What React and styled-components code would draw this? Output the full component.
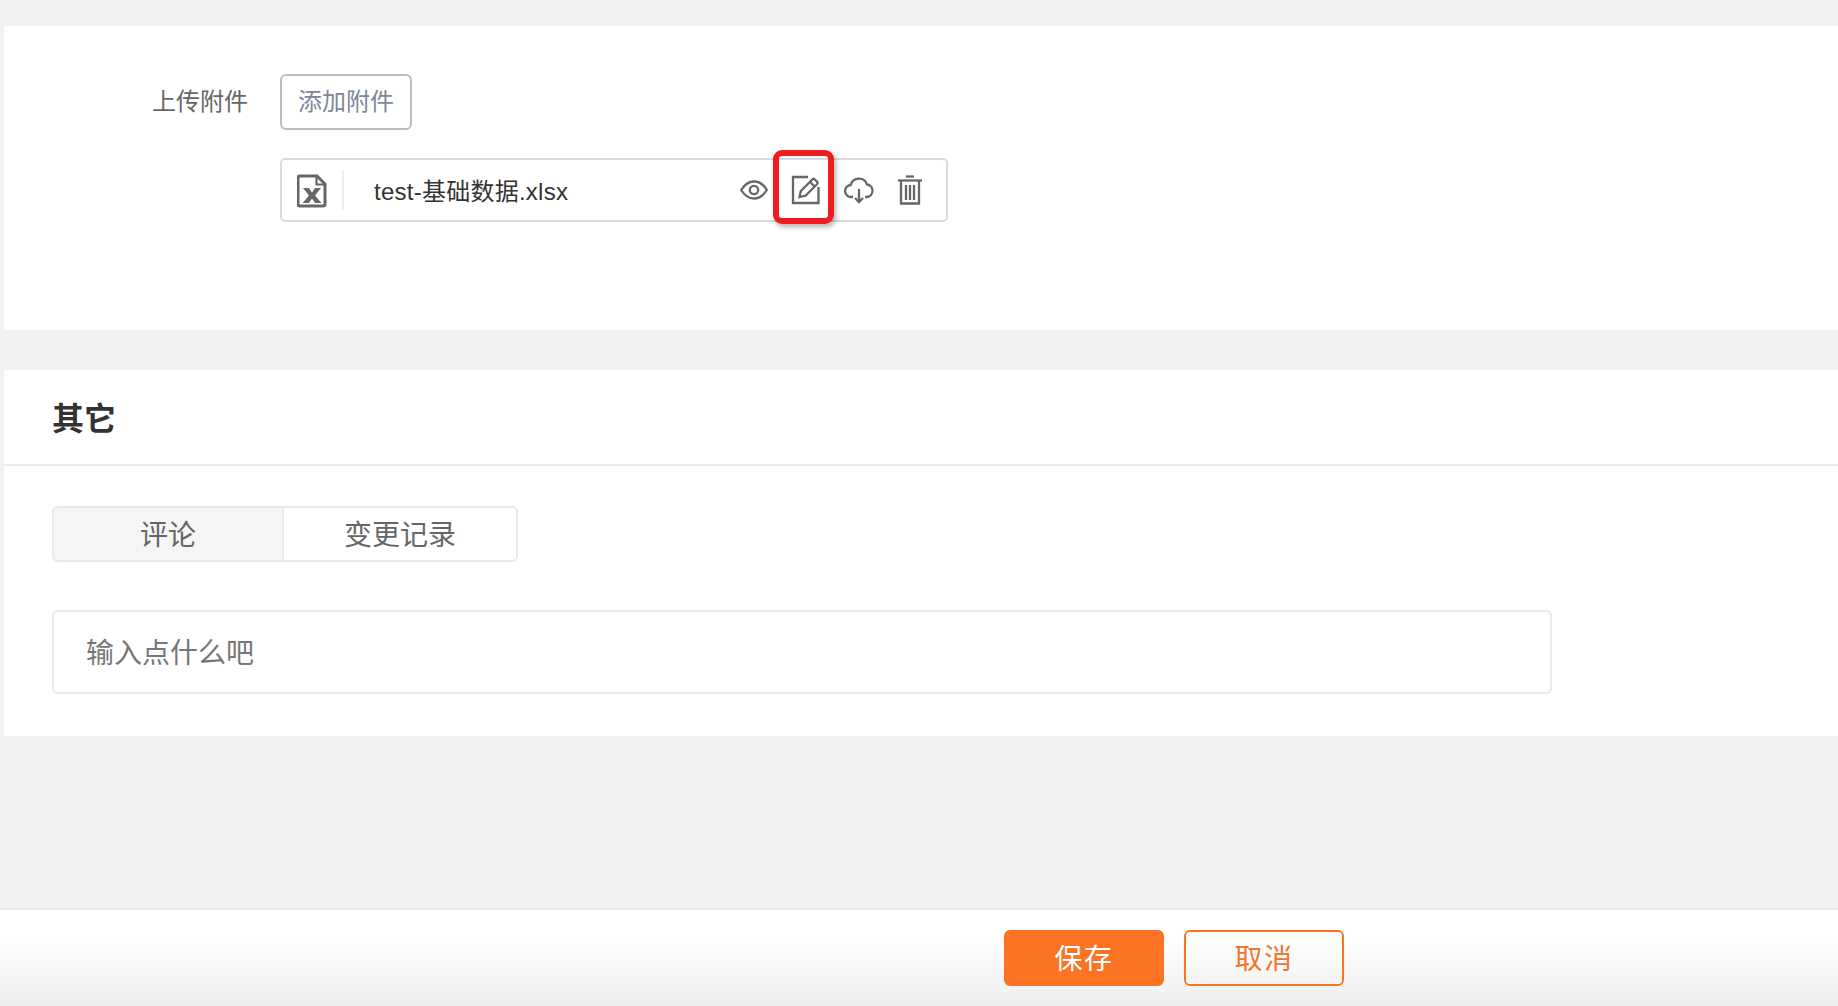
import React from 'react';
import styled, { createGlobalStyle } from 'styled-components';

const FONT = '"Liberation Sans", "Noto Sans CJK SC", sans-serif';

const GlobalStyle = createGlobalStyle`
  html, body {
    margin: 0;
    padding: 0;
    height: 100%;
    background: #f1f2f4;
    overflow: hidden;
  }
  body {
    font-family: ${FONT};
  }
  * {
    box-sizing: border-box;
  }
`;

const Page = styled.div`
  width: 1838px;
  height: 1006px;
  display: flex;
  flex-direction: column;
  padding-top: 26px;
  background: #f1f2f4;
`;

const Card = styled.section`
  margin-left: 4px;
  background: #fff;
`;

const UploadCard = styled(Card)`
  height: 304px;
  padding: 48px 0 0 0;
  margin-bottom: 40px;
`;

const FieldRow = styled.div`
  display: flex;
  align-items: center;
  height: 56px;
`;

const FieldLabel = styled.label`
  width: 244px;
  padding-bottom: 6px;
  text-align: right;
  font-size: 24px;
  color: #666;
`;

const AddButton = styled.button`
  width: 132px;
  height: 56px;
  margin-left: 32px;
  padding: 0 0 6px;
  border: 2px solid #b8bec8;
  border-radius: 6px;
  background: #fff;
  font-family: ${FONT};
  font-size: 24px;
  color: #7d8798;
`;

const FileRow = styled.div`
  position: relative;
  display: flex;
  align-items: center;
  width: 668px;
  height: 64px;
  margin: 28px 0 0 276px;
  border: 2px solid #d9dadd;
  border-radius: 5px;
`;

const FileType = styled.div`
  display: flex;
  align-items: center;
  justify-content: center;
  width: 62px;
  height: 40px;
  padding-top: 1px;
  border-right: 2px solid #eceded;
`;

const FileName = styled.span`
  flex: 1;
  padding: 0 0 2px 30px;
  font-size: 24px;
  letter-spacing: 0.25px;
  color: #333;
`;

const FileActions = styled.div`
  display: flex;
  align-items: center;
  gap: 23px;
  padding-right: 23px;
`;

const Highlight = styled.div`
  position: absolute;
  left: 491px;
  top: -10px;
  width: 61px;
  height: 74px;
  border: 6px solid #ef1c1f;
  border-radius: 9px;
  box-shadow: 2px 3px 5px rgba(0, 0, 0, 0.3);
`;

const OtherCard = styled(Card)`
  height: 366px;
`;

const CardHeader = styled.h2`
  display: flex;
  align-items: center;
  height: 96px;
  margin: 0;
  padding: 0 0 2px 48px;
  border-bottom: 2px solid #ebebeb;
  font-size: 32px;
  font-weight: 700;
  color: #333;
`;

const CardBody = styled.div`
  padding: 40px 48px 0 48px;
`;

const Tabs = styled.div`
  display: flex;
  width: 466px;
  height: 56px;
  border: 2px solid #e9e9e9;
  border-radius: 6px;
  overflow: hidden;
`;

const Tab = styled.div`
  display: flex;
  align-items: center;
  justify-content: center;
  flex: ${(p) => (p.$active ? '0 0 230px' : '1')};
  padding-bottom: 3px;
  background: ${(p) => (p.$active ? '#f5f5f5' : '#fff')};
  border-right: ${(p) => (p.$active ? '2px solid #e9e9e9' : 'none')};
  font-size: 28px;
  color: #666;
`;

const CommentBox = styled.div`
  display: flex;
  align-items: center;
  width: 1500px;
  height: 84px;
  margin-top: 48px;
  padding: 0 0 3px 32px;
  border: 2px solid #e9e9e9;
  border-radius: 6px;
  font-size: 28px;
  color: #777;
`;

const Footer = styled.footer`
  display: flex;
  justify-content: flex-start;
  align-items: center;
  gap: 20px;
  height: 98px;
  margin-top: auto;
  padding: 0 0 1px 1004px;
  border-top: 2px solid #e9eaec;
  background: linear-gradient(#fff 30%, #eeeeef);
`;

const FooterButton = styled.button`
  width: 160px;
  height: 56px;
  padding: 0 0 2px;
  border: 2px solid #f97423;
  border-radius: 6px;
  background: ${(p) => (p.$primary ? '#fb7323' : 'transparent')};
  font-family: ${FONT};
  font-size: 28px;
  letter-spacing: 1.500px;
  color: ${(p) => (p.$primary ? '#fff' : '#f2752b')};
`;

const ICON = '#666';

function ExcelIcon() {
  return (
    <svg width="30" height="34" viewBox="0 0 30 34" fill="none">
      <path d="M3 2h17l8 8v20a2 2 0 0 1-2 2H3a2 2 0 0 1-2-2V4a2 2 0 0 1 2-2z" stroke={ICON} strokeWidth="3" />
      <path d="M19.500 2v8.500H28" stroke={ICON} strokeWidth="2.200" />
      <path d="M6 14h6l3 4.500 3-4.500h6l-6 7.500 6.500 7.500h-6.500l-3-4.500-3 4.500H5.500l6.500-7.500z" fill={ICON} />
    </svg>
  );
}

function EyeIcon() {
  return (
    <svg width="28" height="20" viewBox="0 0 28 20" fill="none" stroke={ICON} strokeWidth="2.300">
      <path d="M1.200 10c3-5 7.300-8.500 12.800-8.500S23.800 5 26.800 10c-3 5-7.300 8.500-12.800 8.500S4.200 15 1.200 10z" />
      <circle cx="14" cy="10" r="4.200" />
    </svg>
  );
}

function EditIcon() {
  return (
    <svg width="30" height="30" viewBox="0 0 30 30" fill="none" stroke={ICON} strokeWidth="2.300">
      <path d="M27.500 12v16H2V2h15" />
      <path d="M8.500 22l1.300-6L21.500 4.300a1.500 1.500 0 0 1 2.100 0l2.600 2.600a1.500 1.500 0 0 1 0 2.100L14.500 20.700z" />
      <path d="M19 7l4.500 4.500" />
    </svg>
  );
}

function CloudDownloadIcon() {
  return (
    <svg width="30" height="28" viewBox="0 0 30 28" fill="none" stroke={ICON} strokeWidth="2.300">
      <path d="M9 21H7.500a6 6 0 0 1-.8-12A8.500 8.500 0 0 1 23 8.500a6.300 6.300 0 0 1 0 12.500h-2" />
      <path d="M15 13v13" />
      <path d="M11 22l4 4 4-4" />
    </svg>
  );
}

function TrashIcon() {
  return (
    <svg width="26" height="30" viewBox="0 0 26 30" fill="none" stroke={ICON} strokeWidth="2.300">
      <path d="M1 5.500h24" />
      <path d="M9 1.500h8" />
      <path d="M4 6v22.500h18V6" />
      <path d="M9 10v15M13 10v15M17 10v15" />
    </svg>
  );
}

export default function App() {
  return (
    <Page>
      <GlobalStyle />
      <UploadCard>
        <FieldRow>
          <FieldLabel>上传附件</FieldLabel>
          <AddButton>添加附件</AddButton>
        </FieldRow>
        <FileRow>
          <FileType>
            <ExcelIcon />
          </FileType>
          <FileName>test-基础数据.xlsx</FileName>
          <FileActions>
            <EyeIcon />
            <EditIcon />
            <CloudDownloadIcon />
            <TrashIcon />
          </FileActions>
          <Highlight />
        </FileRow>
      </UploadCard>
      <OtherCard>
        <CardHeader>其它</CardHeader>
        <CardBody>
          <Tabs>
            <Tab $active>评论</Tab>
            <Tab>变更记录</Tab>
          </Tabs>
          <CommentBox>输入点什么吧</CommentBox>
        </CardBody>
      </OtherCard>
      <Footer>
        <FooterButton $primary>保存</FooterButton>
        <FooterButton>取消</FooterButton>
      </Footer>
    </Page>
  );
}
